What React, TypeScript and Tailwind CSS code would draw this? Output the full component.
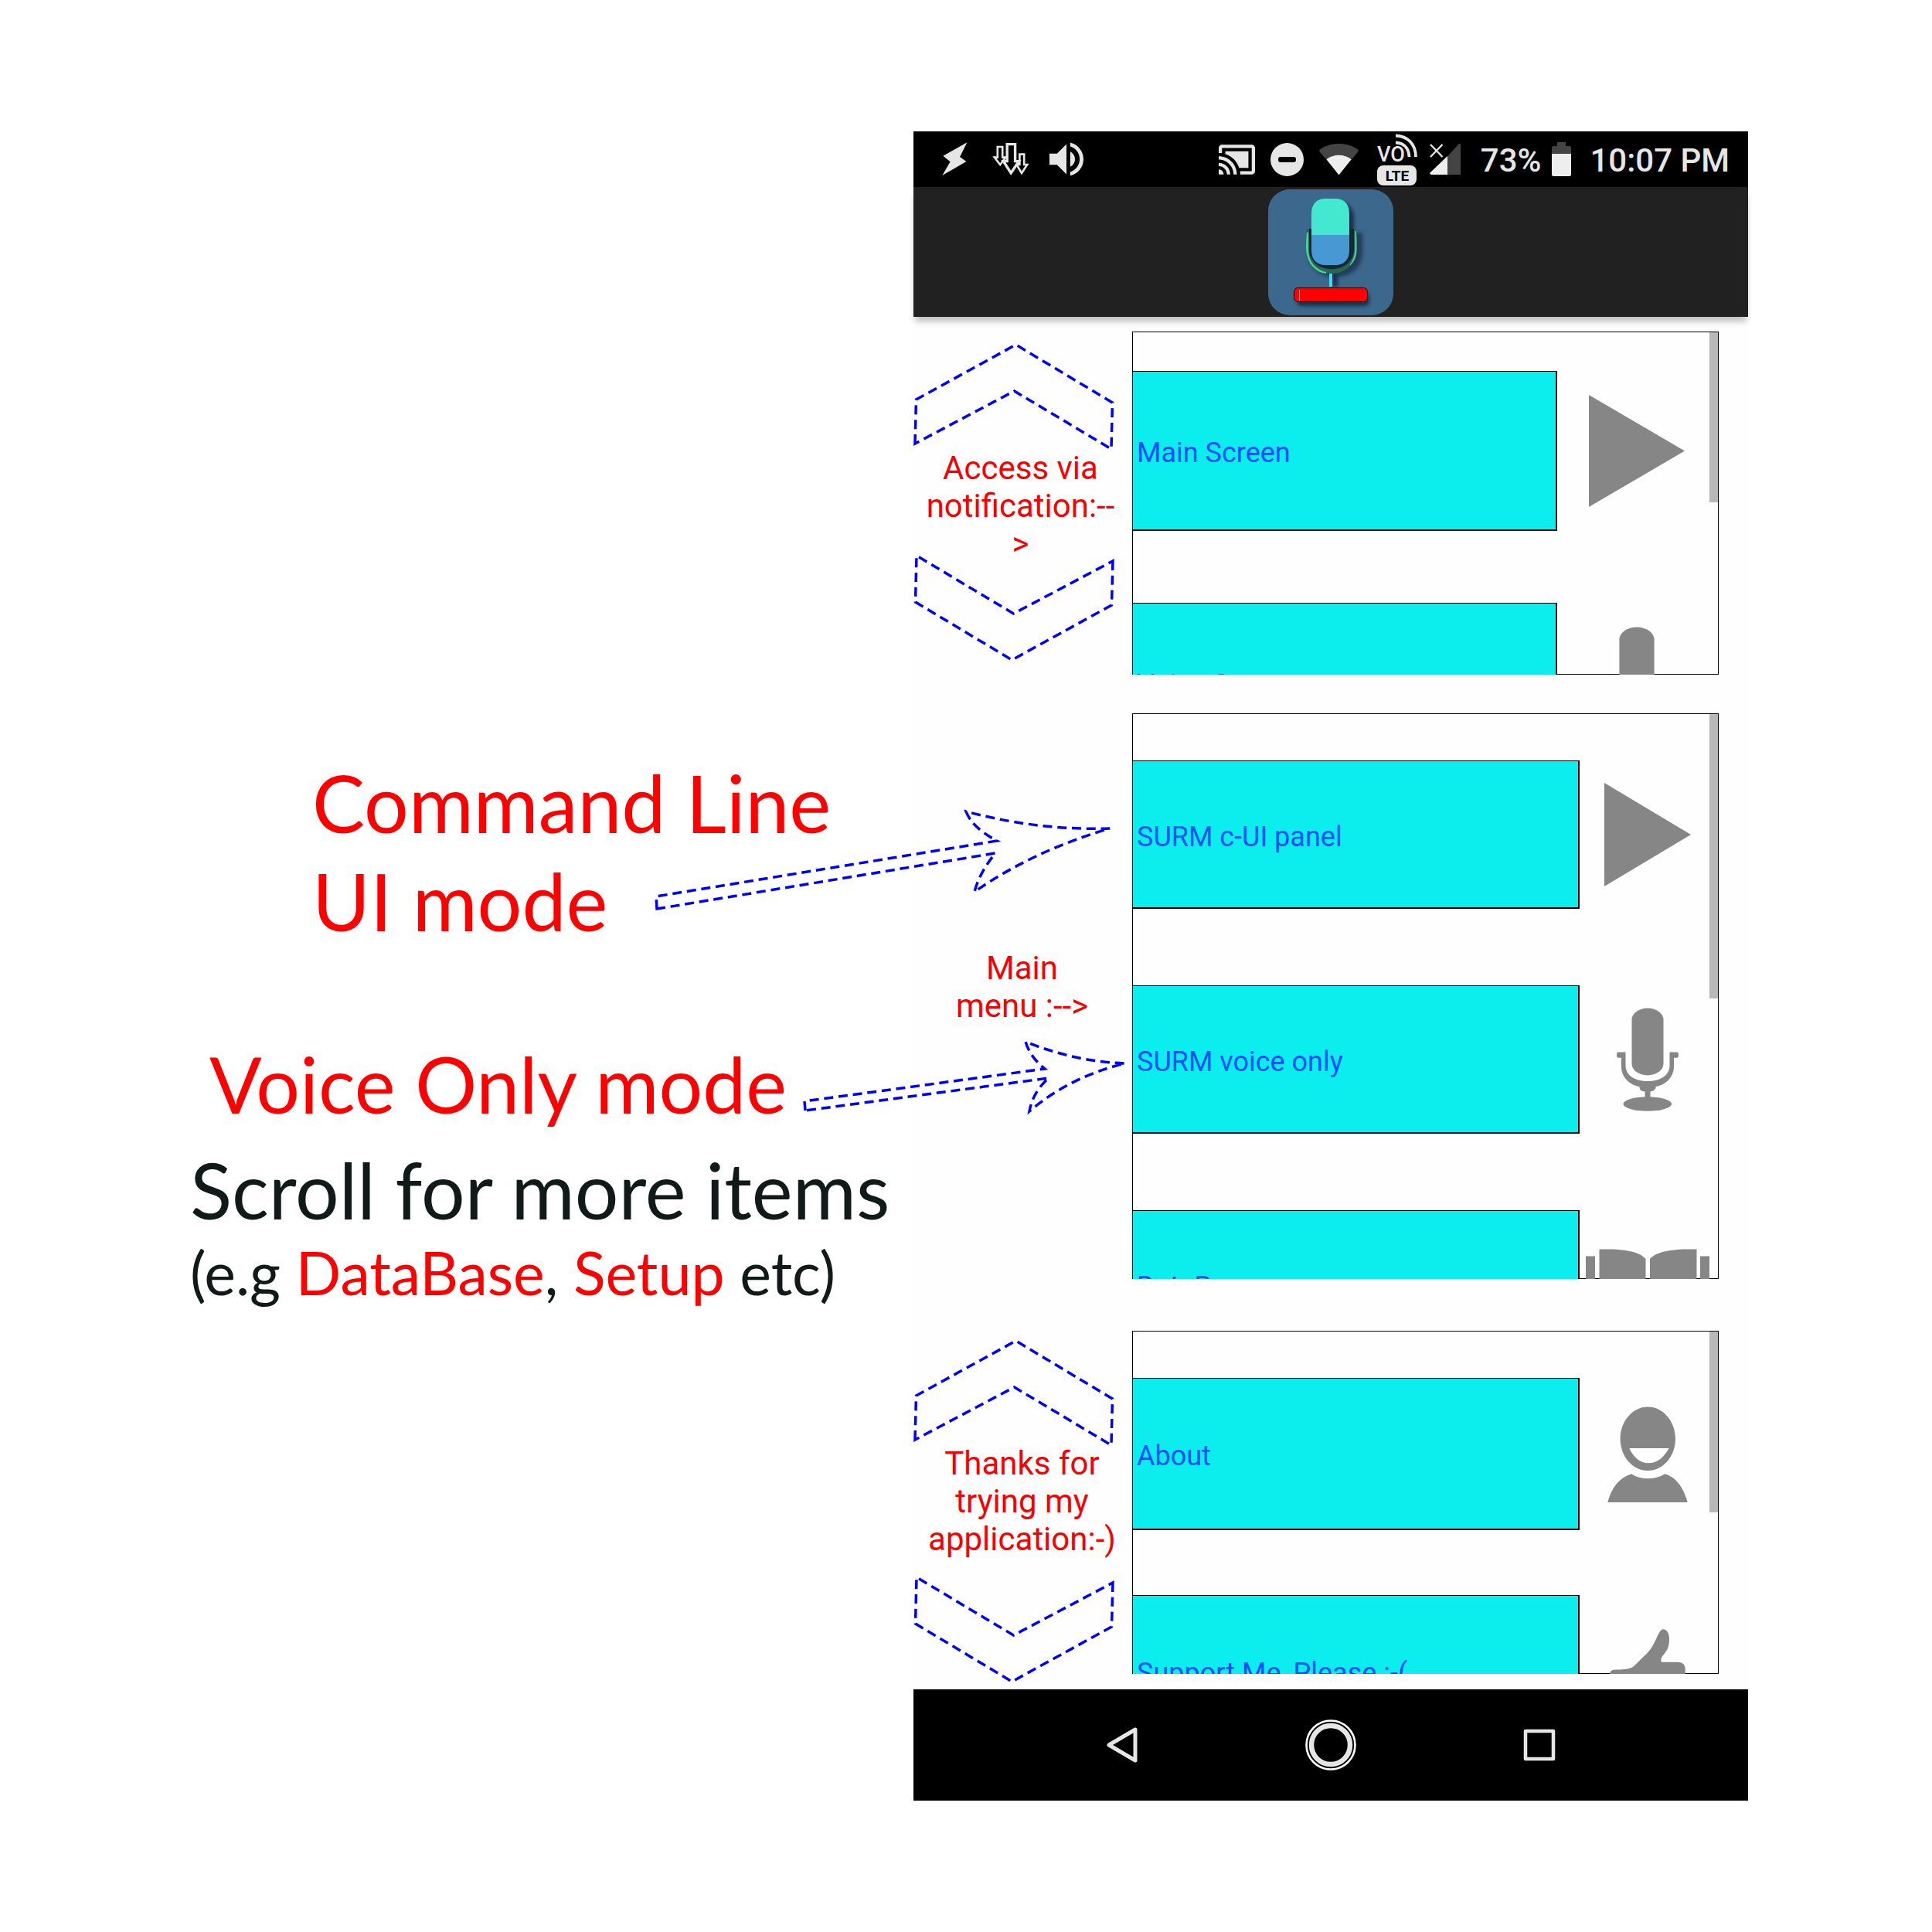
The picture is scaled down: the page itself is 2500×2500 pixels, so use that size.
import type { ReactNode } from "react";

/* ---------- status bar icons ---------- */

function BoltIcon() {
  return (
    <svg viewBox="49 25 33 44" className="h-11 w-[33px] fill-[#e6e6e6]" aria-hidden="true">
      <path d="M81.4 25.3 72.1 44l8.3 6-31.1 18 10.3-17.7-9.2-7.6z" />
    </svg>
  );
}

function DownloadsIcon() {
  return (
    <svg viewBox="114 24 48 44" className="h-11 w-12 fill-black stroke-[#e6e6e6]" strokeWidth="2.6" aria-hidden="true">
      <path d="M120.800 30h6.400v13.600h4l-7 9.600-7.400-9.600h4z" />
      <path d="M149.400 39.600h5.800V53h4l-7.200 11-6.600-11h4z" />
      <path d="M133.200 26.600h10.400v22h4.800L138.200 64l-9.800-15.400h4.800z" strokeWidth="3.400" />
    </svg>
  );
}

function VolumeIcon() {
  return (
    <svg viewBox="3 3 18 18" className="h-11 w-11 fill-[#e6e6e6]" aria-hidden="true">
      <path d="M3 9v6h4l5 5V4L7 9H3zm13.5 3c0-1.77-1.02-3.29-2.5-4.03v8.05c1.48-.73 2.5-2.25 2.5-4.02zM14 3.23v2.06c2.89.86 5 3.54 5 6.71s-2.11 5.85-5 6.71v2.06c4.01-.91 7-4.49 7-8.77s-2.99-7.86-7-8.77z" />
    </svg>
  );
}

function CastIcon() {
  return (
    <svg viewBox="1 3 22 18" className="h-[39px] w-[47px] fill-[#e6e6e6]" aria-hidden="true">
      <path d="M1 18v3h3c0-1.66-1.34-3-3-3zm0-4v2c2.76 0 5 2.24 5 5h2c0-3.87-3.13-7-7-7zm18-7H5v1.63c3.96 1.28 7.09 4.41 8.37 8.37H19V7zM1 10v2c4.97 0 9 4.03 9 9h2c0-6.08-4.93-11-11-11zm20-7H3c-1.1 0-2 .9-2 2v3h2V5h18v14h-7v2h7c1.1 0 2-.9 2-2V5c0-1.1-.9-2-2-2z" />
    </svg>
  );
}

function DoNotDisturbIcon() {
  return (
    <svg viewBox="0 0 43 43" className="h-[43px] w-[43px]" aria-hidden="true">
      <circle cx="21.5" cy="21.5" r="21.5" fill="#e6e6e6" />
      <rect x="10" y="18" width="23" height="7" rx="3" fill="#000" />
    </svg>
  );
}

function WifiIcon() {
  return (
    <svg viewBox="0 0 51 41" className="h-[41px] w-[51px]" aria-hidden="true">
      <path d="M25.5 40 .8 10.400C-.2 9 0 8 1.200 7.200 15-2.400 36-2.400 49.800 7.200 51 8 51.200 9 50.200 10.400z" fill="#444" />
      <path d="M25.500 40.500 9.500 20.300c9-7.400 23-7.400 32 0z" fill="#eee" />
    </svg>
  );
}

function VolteIcon() {
  return (
    <svg viewBox="0 0 52 68" className="h-[68px] w-[52px]" aria-hidden="true">
      <text x="0" y="37" fontFamily="Roboto, sans-serif" fontWeight="500" fontSize="27" fill="#e6e6e6">
        VO
      </text>
      <g fill="none" stroke="#e6e6e6" strokeWidth="3.800">
        <path d="M24 3.500C39 4 50 14 50 31" />
        <path d="M24 12.500C34 13 41 19 41.500 31" />
      </g>
      <rect x="0" y="42" width="51" height="26" rx="8" fill="#e6e6e6" />
      <text x="26" y="62" textAnchor="middle" fontFamily="Roboto, sans-serif" fontWeight="700" fontSize="19" fill="#000">
        LTE
      </text>
    </svg>
  );
}

function SignalIcon() {
  return (
    <svg viewBox="0 0 40 42" className="h-[42px] w-10" aria-hidden="true">
      <path d="M40 1v40H22V18.500L37 2q2-2 3-1z" fill="#444" />
      <path d="M23 17v24H2q-3-1-1-3z" fill="#eee" />
      <path d="m1 2 15.500 16M16.500 2 1 18" stroke="#e6e6e6" strokeWidth="2.400" />
    </svg>
  );
}

function BatteryIcon() {
  return (
    <svg viewBox="0 0 25 44" className="h-11 w-[25px]" aria-hidden="true">
      <path d="M7 0h11v5h5q2 0 2 2v9H0V7q0-2 2-2h5z" fill="#444" />
      <path d="M0 15h25v27q0 2-2 2H2q-2 0-2-2z" fill="#eee" />
    </svg>
  );
}

/* ---------- application logo ---------- */

function AppLogo() {
  return (
    <svg viewBox="0 0 162 163" className="h-[163px] w-[162px]" role="img" aria-label="SURM">
      <defs>
        <filter id="soft" x="-30%" y="-30%" width="160%" height="160%">
          <feGaussianBlur stdDeviation="2" />
        </filter>
      </defs>
      <rect width="162" height="163" rx="28" fill="#3c688d" />
      <g fill="#16283c" filter="url(#soft)" opacity=".85">
        <rect x="60" y="16" width="51" height="86" rx="20" />
        <path d="M52 56v26c0 42 70 42 70 0V56z" opacity=".75" />
        <rect x="83" y="108" width="7" height="18" />
        <rect x="37" y="133" width="94" height="18" rx="6" />
      </g>
      <path d="M51 51c-2 6-2 10-2 24 0 21 15 34 33 34s33-13 33-34c0-14 0-18-2-24z" fill="#28664f" />
      <path d="M51 56v22c0 16 10 27 24 30-14-1-24-14-25-30 0-10 0-16 1-22z" fill="#45d592" stroke="#45d592" strokeWidth="2" />
      <path d="M113 54v22c0 10-3 16-7 22 6-6 8-12 8-22 0-10 0-16-1-22z" fill="#5fcf9f" stroke="#5fcf9f" strokeWidth="1" />
      <path d="M53 51v26c0 35 58 35 58 0V51z" fill="#14263a" />
      <path d="M56 59V31c0-12 7-19 18-19h13c11 0 18 7 18 19v28z" fill="#43e8cf" />
      <path d="M56 59v20c0 12 7 19 18 19h13c11 0 18-7 18-19V59z" fill="#4799d3" />
      <rect x="79" y="109" width="4" height="17" fill="#45d8f5" />
      <rect x="33.500" y="127.500" width="95" height="18" rx="5" fill="#f00" stroke="#200" strokeWidth="1" />
      <rect x="40" y="130" width="1" height="14" fill="#ffe070" />
    </svg>
  );
}

/* ---------- menu icons ---------- */

type IconProps = { className: string };

function PlayIcon({ className }: IconProps) {
  return (
    <svg viewBox="0 0 112 134" preserveAspectRatio="none" className={className} aria-hidden="true">
      <path d="M0 0v134l112-67z" />
    </svg>
  );
}

function MicIcon({ className }: IconProps) {
  return (
    <svg viewBox="0 0 80 134" preserveAspectRatio="none" className={className} aria-hidden="true">
      <rect x="19.500" y="0.500" width="41" height="87" rx="20.500" ry="15" />
      <path d="M2 57.500h9.500v17C11.500 88 24 95 40 95s28.500-7 28.500-20.500v-17H78q2 0 2 3.500t-2 3.800h-4V76C74 92 60 101 50.500 102v2q-2 4-7 4.500v7.500h-7v-7.500q-6-.5-7-4.500v-2C20 101 6 92 6 76V64.800H2q-2-.3-2-3.800t2-3.500z" />
      <ellipse cx="39.800" cy="124.500" rx="31.300" ry="9.300" />
    </svg>
  );
}

function BookIcon({ className }: IconProps) {
  return (
    <svg viewBox="0 0 160 92" className={className} aria-hidden="true">
      <path d="M0 9.500h12V92H0zM148 9.500h12V92h-12z" />
      <path d="M17.500.5h14C52 1 70 4 77.500 13v79H17.500zM143.500.5h-14C109 1 91 4 83 13v79h60.500z" />
    </svg>
  );
}

function PersonIcon({ className }: IconProps) {
  return (
    <svg viewBox="0 0 104 124" className={className} aria-hidden="true">
      <path
        fillRule="evenodd"
        d="M52.300.4C72 .4 88 19 88 41.700S72 83 52.300 83 16.600 64.400 16.600 41.700 32.600.4 52.300.4zM28.300 54c6 12.500 14 19.300 25 19.300S73 66 79.600 54z"
      />
      <path d="M.3 124C5 106 15 92 31 87.300c12 8 31 8 43 0C89 91 99 106 103.700 124z" />
    </svg>
  );
}

function ThumbIcon({ className }: IconProps) {
  return (
    <svg viewBox="0 0 98 110" className={className} aria-hidden="true">
      <path d="M69 .3c5 0 8 5 8 12.700 0 12-4 16-8 21-3 4-3 6-2 8.700h20c7 0 10.700 3 10.700 9V80q0 30-30 30H10Q0 110 0 100V60q0-7 5-7.300c12-.2 19-.5 25-3.700 4-3 9-9 14-13.500C56 25 58 16 63.500 5.500 65.500 2 67 .3 69 .3z" />
    </svg>
  );
}

/* ---------- left column decorations ---------- */

function Chevron({ down = false }: { down?: boolean }) {
  return (
    <svg
      viewBox="0 0 260 140"
      className={down ? "h-[140px] w-[260px] rotate-180" : "h-[140px] w-[260px]"}
      aria-hidden="true"
    >
      <path
        d="M2 130 3.500 73 132.500 2 257.500 77 256 137 130.500 62z"
        fill="none"
        stroke="#00f"
        strokeWidth="3.500"
        strokeDasharray="12 6.800"
      />
    </svg>
  );
}

function SideText({ className, children }: { className: string; children: ReactNode }) {
  return (
    <p className={"w-full text-center text-[42px] leading-[49px] text-[#f80000] " + className}>{children}</p>
  );
}

/* ---------- menu list ---------- */

type Item = { label: string; icon: ReactNode };

type ListProps = {
  items: Item[];
  boxClass: string;
  listClass: string;
  rowClass: string;
  thumbClass: string;
  name: string;
};

function MenuList({ items, boxClass, listClass, rowClass, thumbClass, name }: ListProps) {
  return (
    <nav aria-label={name} className={"relative border border-black " + boxClass}>
      <ul className={"-mb-px flex flex-col overflow-hidden " + listClass}>
        {items.map((item) => (
          <li key={item.label} className={"grid shrink-0 " + rowClass}>
            <button
              type="button"
              className="border-t border-r-2 border-b-2 border-black bg-[#0ceeee] pt-[6px] pl-[5px] text-left text-[36px] leading-[42px] text-[#0a50ff]"
            >
              {item.label}
            </button>
            <span className="flex items-center justify-center fill-[#868686] pr-[3px]">{item.icon}</span>
          </li>
        ))}
      </ul>
      <div className={"absolute top-0 right-0 w-[11px] bg-[#b8b8b8] " + thumbClass} />
    </nav>
  );
}

const shortcuts: Item[] = [
  { label: "Main Screen", icon: <PlayIcon className="h-[145px] w-[124px]" /> },
  { label: "Voice Screen", icon: <MicIcon className="h-[145px] w-[88px]" /> },
];

const mainMenu: Item[] = [
  { label: "SURM c-UI panel", icon: <PlayIcon className="h-[134px] w-[112px]" /> },
  { label: "SURM voice only", icon: <MicIcon className="h-[134px] w-20" /> },
  { label: "DataBase", icon: <BookIcon className="h-[92px] w-[160px]" /> },
];

const extras: Item[] = [
  { label: "About", icon: <PersonIcon className="h-[124px] w-[104px]" /> },
  { label: "Support Me, Please :-(", icon: <ThumbIcon className="h-[110px] w-[98px]" /> },
];

/* ---------- phone ---------- */

function StatusBar() {
  return (
    <div className="flex h-[72px] items-center justify-between bg-black pr-6 pl-[37px] text-[42px] font-medium text-[#e6e6e6]">
      <div className="flex items-center gap-8">
        <BoltIcon />
        <DownloadsIcon />
        <div className="-ml-[6px]">
          <VolumeIcon />
        </div>
      </div>
      <div className="flex items-center">
        <div className="flex items-center gap-[20px]">
          <CastIcon />
          <DoNotDisturbIcon />
          <WifiIcon />
        </div>
        <div className="ml-6 flex items-center gap-4">
          <VolteIcon />
          <SignalIcon />
        </div>
        <span className="ml-[26px] pt-[2px]">73%</span>
        <div className="mr-6 ml-[14px]">
          <BatteryIcon />
        </div>
        <span className="pt-[2px]">10:07 PM</span>
      </div>
    </div>
  );
}

function NavBar() {
  return (
    <div className="grid h-36 grid-cols-3 bg-black px-[12.5%]">
      <button type="button" aria-label="Back" className="flex items-center justify-center">
        <svg viewBox="0 0 40 46" className="h-[46px] w-10" fill="none" stroke="#e6e6e6" strokeWidth="5" strokeLinejoin="round">
          <path d="M37 3v40L3 23z" />
        </svg>
      </button>
      <button type="button" aria-label="Home" className="flex items-center justify-center">
        <svg viewBox="0 0 68 68" className="h-[68px] w-[68px]" fill="none">
          <circle cx="34" cy="34" r="31.500" stroke="#fff" strokeWidth="2.600" />
          <circle cx="34" cy="34" r="25" stroke="#e6e6e6" strokeWidth="6.500" />
        </svg>
      </button>
      <button type="button" aria-label="Recent apps" className="flex items-center justify-center">
        <svg viewBox="0 0 42 42" className="h-[42px] w-[42px]" fill="none" stroke="#e6e6e6" strokeWidth="4.500" strokeLinejoin="round">
          <path d="M3 3h36v36H3z" />
        </svg>
      </button>
    </div>
  );
}

const sectionGrid = "grid grid-cols-[283fr_759fr_38fr]";

function Phone() {
  return (
    <div className="bg-[#fefefe] font-['Roboto',sans-serif]">
      <StatusBar />
      <header className="flex h-[168px] items-center justify-center bg-[#212121] shadow-[0_8px_8px_-2px_rgba(0,0,0,0.25)]">
        <AppLogo />
      </header>

      <main className="flex flex-col pt-[19px] pb-5">
        <section className={sectionGrid}>
          <div className="flex flex-col items-start pt-[15px]">
            <Chevron />
            <SideText className="-mt-[3px] -mb-[12px] pr-[6px]">
              Access via
              <br />
              notification:--
              <br />
              &gt;
            </SideText>
            <Chevron down />
          </div>
          <MenuList
            name="Shortcuts"
            items={shortcuts}
            boxClass="h-[444px]"
            listClass="h-[443px] gap-[93px] pt-[50px]"
            rowClass="h-[207px] grid-cols-[549fr_208fr]"
            thumbClass="h-[220px]"
          />
        </section>

        <section className={sectionGrid + " mt-[50px]"}>
          <div className="flex flex-col justify-center pb-6">
            <SideText className="pr-[2px]">
              Main
              <br />
              menu :--&gt;
            </SideText>
          </div>
          <MenuList
            name="Main menu"
            items={mainMenu}
            boxClass="h-[732px]"
            listClass="h-[731px] gap-[99px] pt-[60px]"
            rowClass="h-[192px] grid-cols-[578fr_179fr]"
            thumbClass="h-[368px]"
          />
        </section>

        <section className={sectionGrid + " mt-[67px]"}>
          <div className="-mb-5 flex flex-col items-start pt-[11px]">
            <Chevron />
            <SideText className="-mt-[4px] mb-[22px] pr-[2px]">
              Thanks for
              <br />
              trying my
              <br />
              application:-)
            </SideText>
            <Chevron down />
          </div>
          <MenuList
            name="More"
            items={extras}
            boxClass="h-[444px]"
            listClass="h-[443px] gap-[84px] pt-[60px]"
            rowClass="h-[197px] grid-cols-[578fr_179fr]"
            thumbClass="h-[234px]"
          />
        </section>
      </main>

      <NavBar />
    </div>
  );
}

/* ---------- annotations ---------- */

function Notes() {
  return (
    <aside className="pt-[805px] font-['Lato',sans-serif] text-[102px] leading-[127px] whitespace-nowrap text-[#f00]">
      <p className="pl-[404px]">
        Command Line
        <br />
        UI mode
      </p>
      <p className="mt-[110px] pl-[271px] text-[100px]">Voice Only mode</p>
      <p className="mt-[13px] pl-[246px] text-[100px] leading-[120px] text-[#101a18]">Scroll for more items</p>
      <p className="pl-[246px] text-[77px] leading-[94px] text-[#101a18]">
        (e.g <span className="text-[#f00]">DataBase</span>, <span className="text-[#f00]">Setup</span> etc)
      </p>
    </aside>
  );
}

function Pointers() {
  return (
    <svg
      viewBox="0 0 2500 2500"
      className="pointer-events-none absolute top-0 left-0 w-full"
      fill="none"
      stroke="#00f"
      strokeWidth="3.500"
      strokeDasharray="12 6.800"
      aria-hidden="true"
    >
      <path d="M850 1176 849 1160 1290 1088Q1258 1071 1250 1050 1344 1075 1436 1072 1337 1101 1261 1154 1267 1130 1288 1104z" />
      <path d="M1042 1437 1041 1425 1352 1383Q1333 1368 1327 1348 1392 1374 1456 1376 1385 1393 1332 1438 1337 1412 1357 1395z" />
    </svg>
  );
}

export default function App() {
  return (
    <div className="relative grid grid-cols-[1182fr_1080fr_238fr] items-start bg-white pt-[170px] pb-[170px]">
      <Notes />
      <Phone />
      <Pointers />
    </div>
  );
}
